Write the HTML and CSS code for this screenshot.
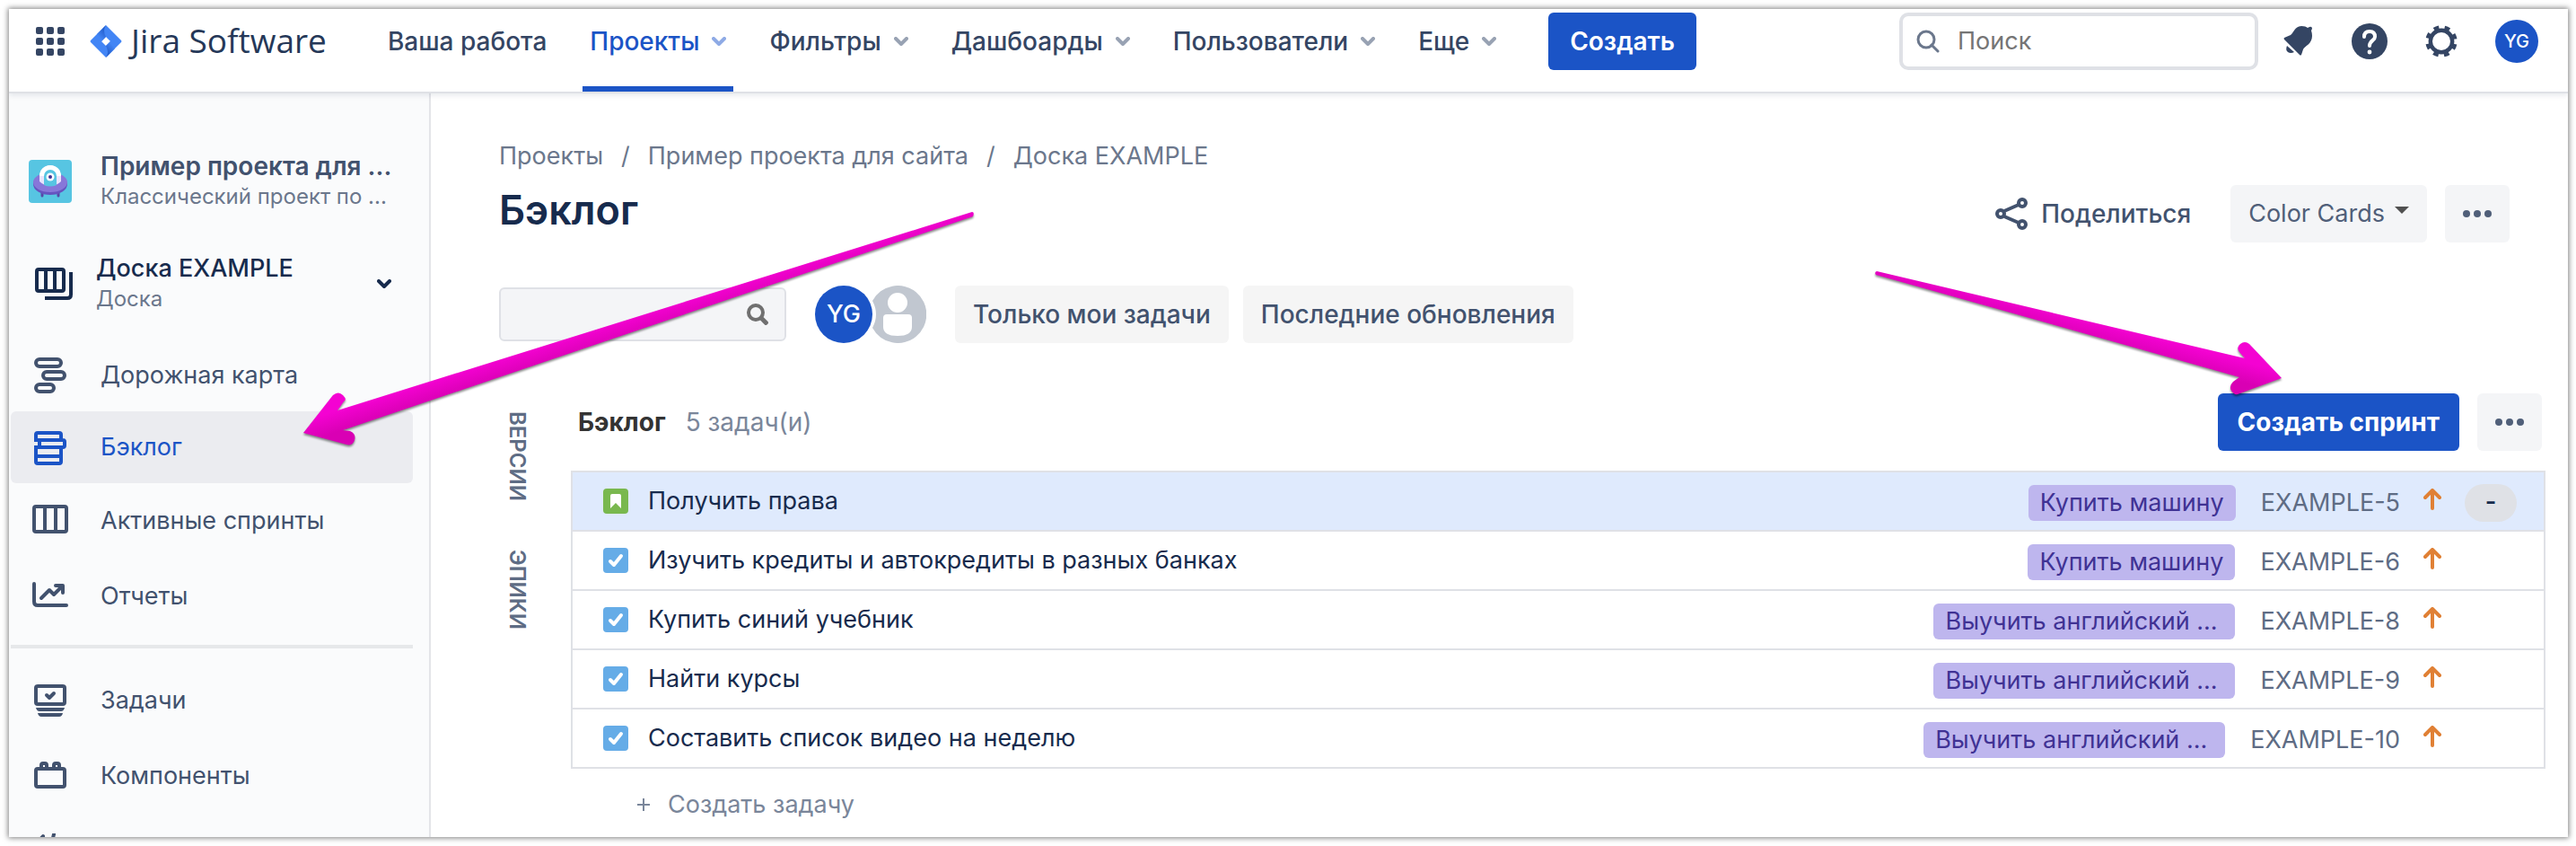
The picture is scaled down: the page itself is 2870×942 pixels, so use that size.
FILE: index.html
```html
<!DOCTYPE html>
<html lang="ru">
<head>
<meta charset="utf-8">
<title>Бэклог - Jira Software</title>
<link rel="stylesheet" href="styles.css">
</head>
<body>
<svg class="defs" aria-hidden="true">
  <defs>
    <symbol id="chev" viewBox="0 0 16 10"><path d="M2 2l6 6 6-6" fill="none" stroke="currentColor" stroke-width="4" stroke-linecap="round" stroke-linejoin="round"/></symbol>
    <symbol id="dots" viewBox="0 0 32 8"><circle cx="4" cy="4" r="4"/><circle cx="16" cy="4" r="4"/><circle cx="28" cy="4" r="4"/></symbol>
    <symbol id="task" viewBox="0 0 28 28"><rect width="28" height="28" rx="4" fill="#65ace7"/><path d="M8 15l4 4 8-10" fill="none" stroke="#fff" stroke-width="4" stroke-linecap="round" stroke-linejoin="round"/></symbol>
    <symbol id="story" viewBox="0 0 28 28"><rect width="28" height="28" rx="4" fill="#79b84e"/><path d="M8 8q0-2 2-2h8q2 0 2 2v14l-6-6-6 6z" fill="#fff"/></symbol>
    <symbol id="up" viewBox="0 0 20 24"><path d="M10 22V3M2 10l8-8 8 8" fill="none" stroke="#e08035" stroke-width="4" stroke-linecap="round" stroke-linejoin="round"/></symbol>
    <linearGradient id="pink1" gradientUnits="userSpaceOnUse" x1="374" y1="122" x2="381" y2="144"><stop offset="0" stop-color="#f402d2"/><stop offset="1" stop-color="#d900b4"/></linearGradient>
    <linearGradient id="pink2" gradientUnits="userSpaceOnUse" x1="234" y1="58" x2="228" y2="80"><stop offset="0" stop-color="#f402d2"/><stop offset="1" stop-color="#d900b4"/></linearGradient>
  </defs>
</svg>
<div class="window">
  <header class="topbar">
    <button class="plain" aria-label="Приложения"><svg width="32" height="32" fill="#344563"><rect width="8" height="8" rx="2"/><rect x="12" width="8" height="8" rx="2"/><rect x="24" width="8" height="8" rx="2"/><rect y="12" width="8" height="8" rx="2"/><rect x="12" y="12" width="8" height="8" rx="2"/><rect x="24" y="12" width="8" height="8" rx="2"/><rect y="24" width="8" height="8" rx="2"/><rect x="12" y="24" width="8" height="8" rx="2"/><rect x="24" y="24" width="8" height="8" rx="2"/></svg></button>
    <a class="logo" href="#"><svg width="36" height="36" viewBox="0 0 36 36"><defs><linearGradient id="jg" x1="0.8" y1="0" x2="0.2" y2="1"><stop offset="0.1" stop-color="#1f59c8"/><stop offset="0.8" stop-color="#4285f5"/></linearGradient><linearGradient id="jh" x1="0.2" y1="1" x2="0.8" y2="0"><stop offset="0.1" stop-color="#1f59c8"/><stop offset="0.8" stop-color="#4285f5"/></linearGradient></defs><path d="M18 0L35 17q1 1 0 2L18 36 1 19q-1-1 0-2zM18 13l-5 5 5 5 5-5z" fill="#4285f5" fill-rule="evenodd"/><path d="M18 0q-4 6 0 13l-5 5-5-8z" fill="url(#jg)"/><path d="M18 36q4-6 0-13l5-5 5 8z" fill="url(#jh)"/></svg><span>Jira Software</span></a>
    <nav class="menu" aria-label="Главное меню">
      <a href="#">Ваша работа</a>
      <a href="#" class="on">Проекты<svg width="16" height="10"><use href="#chev"/></svg></a>
      <a href="#">Фильтры<svg width="16" height="10"><use href="#chev"/></svg></a>
      <a href="#">Дашбоарды<svg width="16" height="10"><use href="#chev"/></svg></a>
      <a href="#">Пользователи<svg width="16" height="10"><use href="#chev"/></svg></a>
      <a href="#">Еще<svg width="16" height="10"><use href="#chev"/></svg></a>
    </nav>
    <button class="btn primary">Создать</button>
    <div class="tools">
      <label class="search"><svg width="26" height="26" viewBox="0 0 26 26" fill="none" stroke="#6b778c" stroke-width="3" stroke-linecap="round"><circle cx="11" cy="11" r="9"/><path d="M17 17l7 7"/></svg><input type="text" placeholder="Поиск" aria-label="Поиск"></label>
      <button class="plain" aria-label="Уведомления"><svg width="34" height="34" viewBox="0 0 34 34" fill="#344563"><path d="M1 13L8 10C12 7 12 1 20 0Q25 0 27 2L29 1q3-1 3 2l-1 2q1 3 1 6C32 20 24 22 22 26L20 32q-1 1-2 0L1 15q-1-1 0-2z"/><path d="M4 22l8 7q-4 2-7 0t-1-7z"/></svg></button>
      <button class="plain" aria-label="Справка"><svg width="40" height="40" viewBox="0 0 40 40"><circle cx="20" cy="20" r="20" fill="#344563"/><path d="M14 15q0-6 6-6t6 6c0 4-6 4-6 10" fill="none" stroke="#fff" stroke-width="4" stroke-linecap="round"/><circle cx="20" cy="32" r="2.400" fill="#fff"/></svg></button>
      <button class="plain" aria-label="Настройки"><svg width="36" height="36" viewBox="0 0 36 36"><circle cx="18" cy="18" r="12.200" fill="none" stroke="#344563" stroke-width="4.400"/><circle cx="18" cy="18" r="15.500" fill="none" stroke="#344563" stroke-width="4.400" stroke-dasharray="5.770 6.404" stroke-dashoffset="-3.200"/></svg></button>
      <button class="plain avatar small">YG</button>
    </div>
  </header>
  <div class="body">
    <aside class="side">
      <div class="project">
        <svg width="48" height="48" viewBox="0 0 48 48"><rect width="48" height="48" rx="4" fill="#57c5e2"/><path d="M15 35v5M33 35v5" stroke="#5748a8" stroke-width="3" stroke-linecap="round"/><ellipse cx="24" cy="27" rx="19" ry="12" fill="#6554c0"/><ellipse cx="24" cy="25" rx="19" ry="11" fill="#8777d9"/><path d="M12 24V18a12 12 0 0 1 24 0v6q-5 5-12 5t-12-5z" fill="#e9e4fb"/><path d="M12 18a12 12 0 0 1 24 0z" fill="#fff"/><path d="M17 28V18a7 7 0 0 1 14 0v10q-7 3-14 0z" fill="#57c5e2"/><circle cx="24" cy="19" r="4.500" fill="#fff"/><circle cx="24" cy="19" r="2" fill="#403294"/></svg>
        <div class="two"><strong>Пример проекта для ...</strong><small>Классический проект по ...</small></div>
      </div>
      <button class="board">
        <svg width="42" height="36" viewBox="0 0 42 36" fill="none" stroke="#172b4d" stroke-width="4"><rect x="2" y="2" width="30" height="24" rx="2"/><path d="M12 2v24M22 2v24M40 5v25q0 4-4 4H11"/></svg>
        <span class="two"><b>Доска EXAMPLE</b><small>Доска</small></span>
        <svg class="end" width="16" height="10"><use href="#chev"/></svg>
      </button>
      <nav class="links" aria-label="Проект">
        <a href="#" class="first"><svg width="40" height="40" viewBox="0 0 40 40" fill="none" stroke="currentColor" stroke-width="4"><rect x="4" y="2" width="28" height="8" rx="4"/><rect x="12" y="16" width="24" height="8" rx="4"/><rect x="4" y="30" width="20" height="8" rx="4"/></svg>Дорожная карта</a>
        <a href="#" class="on"><svg width="40" height="40" viewBox="0 0 40 40" fill="none" stroke="currentColor" stroke-width="4"><path d="M4 14V6q0-2 2-2h24q2 0 2 2v6M8 12h26q2 0 2 2v4q0 2-2 2H8zM4 20h28v16q0 2-2 2H6q-2 0-2-2zM4 30h28"/></svg>Бэклог</a>
        <a href="#"><svg width="40" height="40" viewBox="0 0 40 40" fill="none" stroke="currentColor" stroke-width="4"><rect x="2" y="4" width="36" height="28" rx="2"/><path d="M14 4v28M26 4v28"/></svg>Активные спринты</a>
        <a href="#"><svg width="40" height="40" viewBox="0 0 40 40" fill="none" stroke="currentColor" stroke-width="4" stroke-linecap="round" stroke-linejoin="round"><path d="M2 6v20q0 4 4 4h32M10 22l9-9 5 5 9-9M26 8h8v8"/></svg>Отчеты</a>
      </nav>
      <hr>
      <nav class="links" aria-label="Дополнительно">
        <a href="#"><svg width="40" height="40" viewBox="0 0 40 40" fill="none" stroke="currentColor" stroke-width="4"><rect x="4" y="4" width="32" height="20" rx="2"/><path d="M16 14l3 3 5-5" stroke-linecap="round" stroke-linejoin="round"/><path d="M4 28h32q-1 4-4 4H8q-3 0-4-4zM6 34h28q-1 4-4 4H10q-3 0-4-4z" fill="currentColor" stroke="none"/></svg>Задачи</a>
        <a href="#"><svg width="40" height="40" viewBox="0 0 40 40" fill="none" stroke="currentColor" stroke-width="4"><rect x="4" y="12" width="32" height="20" rx="2"/><path d="M10 12V8q0-2 2-2h2q2 0 2 2v4M24 12V8q0-2 2-2h2q2 0 2 2v4"/></svg>Компоненты</a>
        <a href="#" aria-label="Релизы"><svg width="40" height="40" viewBox="0 0 40 40" fill="none" stroke="currentColor" stroke-width="4" stroke-linecap="round"><path d="M24 1l-6 24M12 3L4 12"/></svg></a>
      </nav>
    </aside>
    <main class="main">
      <nav class="crumbs" aria-label="Навигация"><a href="#">Проекты</a><span>/</span><a href="#">Пример проекта для сайта</a><span>/</span><a href="#">Доска EXAMPLE</a></nav>
      <div class="head">
        <h1>Бэклог</h1>
        <div class="actions">
          <button class="plain share"><svg width="36" height="36" viewBox="0 0 36 36" fill="none" stroke="currentColor" stroke-width="4"><circle cx="6" cy="18" r="4"/><circle cx="30" cy="6" r="4"/><circle cx="30" cy="30" r="4"/><path d="M10 15L26 8M10 21l16 7"/></svg>Поделиться</button>
          <button class="btn cards">Color Cards<svg width="16" height="8" viewBox="0 0 16 8" fill="#505050"><path d="M0 0h16l-8 8z"/></svg></button>
          <button class="btn more" aria-label="Ещё"><svg width="32" height="8" fill="#505f79"><use href="#dots"/></svg></button>
        </div>
      </div>
      <div class="filters">
        <label class="find"><input type="text" aria-label="Поиск в бэклоге"><svg width="24" height="24" viewBox="0 0 24 24" fill="none" stroke="#707070"><circle cx="10" cy="10" r="8" stroke-width="4"/><path d="M16 16l7 7" stroke-width="5"/></svg></label>
        <div class="people"><button class="plain avatar">YG</button><svg width="60" height="64" viewBox="0 0 60 64"><path d="M0 17A32 32 0 1 1 0 47Q8 32 0 17z" fill="#c1c7d0"/><circle cx="28" cy="19" r="11" fill="#fff"/><path d="M12 36q0-4 4-4h24q4 0 4 4v10q0 10-16 10T12 46z" fill="#fff"/></svg></div>
        <button class="btn soft">Только мои задачи</button>
        <button class="btn soft">Последние обновления</button>
      </div>
      <div class="plan">
        <div class="tabs"><button class="plain">ВЕРСИИ</button><button class="plain">ЭПИКИ</button></div>
        <section class="backlog">
          <div class="bar"><h2>Бэклог</h2><span class="count">5 задач(и)</span><button class="btn primary strong">Создать спринт</button><button class="btn more" aria-label="Действия"><svg width="32" height="8" fill="#505f79"><use href="#dots"/></svg></button></div>
          <ul class="list">
            <li class="picked"><svg width="28" height="28"><use href="#story"/></svg><span class="name">Получить права</span><span class="tag">Купить машину</span><a href="#">EXAMPLE-5</a><svg class="prio" width="20" height="24"><use href="#up"/></svg><span class="est">-</span></li>
            <li><svg width="28" height="28"><use href="#task"/></svg><span class="name">Изучить кредиты и автокредиты в разных банках</span><span class="tag">Купить машину</span><a href="#">EXAMPLE-6</a><svg class="prio" width="20" height="24"><use href="#up"/></svg><span class="est none"></span></li>
            <li><svg width="28" height="28"><use href="#task"/></svg><span class="name">Купить синий учебник</span><span class="tag long">Выучить английский ...</span><a href="#">EXAMPLE-8</a><svg class="prio" width="20" height="24"><use href="#up"/></svg><span class="est none"></span></li>
            <li><svg width="28" height="28"><use href="#task"/></svg><span class="name">Найти курсы</span><span class="tag long">Выучить английский ...</span><a href="#">EXAMPLE-9</a><svg class="prio" width="20" height="24"><use href="#up"/></svg><span class="est none"></span></li>
            <li><svg width="28" height="28"><use href="#task"/></svg><span class="name">Составить список видео на неделю</span><span class="tag long">Выучить английский ...</span><a href="#">EXAMPLE-10</a><svg class="prio" width="20" height="24"><use href="#up"/></svg><span class="est none"></span></li>
          </ul>
          <button class="plain add"><svg width="14" height="14" viewBox="0 0 14 14" stroke="currentColor" stroke-width="2"><path d="M7 0v14M0 7h14"/></svg>Создать задачу</button>
        </section>
      </div>
    </main>
  </div>
</div>
<svg class="arrow left" width="760" height="270" viewBox="0 0 760 270"><path d="M749 7Q752 7 750 12L48 250 56 251Q63 254 61 261T52 266L4 253 37 211Q43 206 48 211T49 218L42 228z" fill="url(#pink1)"/></svg>
<svg class="arrow right" width="464" height="150" viewBox="0 0 464 150"><path d="M7 7Q4 8 6 11L411 125 404 130Q399 135 402 140T409 144L458 126 422 88Q417 84 412 88T411 97L417 104z" fill="url(#pink2)"/></svg>
</body>
</html>
```
FILE: styles.css
```css
* { box-sizing: border-box; }

body {
  margin: 0;
  height: 100vh;
  padding: 10px 9px 10px 10px;
  position: relative;
  overflow: hidden;
  background: #fff;
  color: #172b4d;
  font: 27px/40px Inter, "Noto Sans", sans-serif;
}

a { color: inherit; text-decoration: none; }
button, input { font: inherit; color: inherit; }
button { cursor: pointer; }
svg { display: block; flex: none; }
h1, h2, ul { margin: 0; padding: 0; }
.defs { position: absolute; width: 0; height: 0; }

.window {
  height: 100%;
  display: flex;
  flex-direction: column;
  overflow: hidden;
  background: #fff;
  box-shadow: 0 0 6px 1px rgba(0, 0, 0, 0.5);
}

.plain { border: 0; padding: 0; background: none; }

.btn {
  height: 64px;
  flex: none;
  border: 0;
  border-radius: 6px;
  padding: 0 20px;
  background: #f4f5f7;
  color: #505f79;
  white-space: nowrap;
}
.btn.primary { padding: 0 24px; background: #1b54c6; color: #fff; font-size: 28px; font-weight: 600; }
.btn.strong { padding: 0 22px; font-weight: 700; margin-left: auto; }
.btn.more { width: 72px; margin-left: 20px; }
.btn.soft { background: #f5f5f5; color: #42526e; font-size: 28px; font-weight: 500; }

/* top bar */
.topbar {
  position: relative;
  z-index: 1;
  height: 94px;
  flex: none;
  display: flex;
  align-items: flex-start;
  padding: 4px 33px 0 30px;
  border-bottom: 2px solid #dfe1e6;
  box-shadow: 0 2px 6px rgba(9, 30, 66, 0.1);
  color: #344563;
}
.topbar > .plain, .logo { height: 64px; display: flex; align-items: center; }
.logo { margin-left: 28px; gap: 10px; color: #253858; font: 37px/36px "Open Sans", sans-serif; white-space: nowrap; }
.logo span { padding-bottom: 2px; }
.menu { display: flex; align-self: stretch; margin-left: 60px; gap: 32px; font-size: 28px; font-weight: 500; white-space: nowrap; }
.menu a { display: flex; align-items: center; gap: 14px; padding: 0 8px 18px; border-bottom: 6px solid transparent; }
.menu svg { color: #98a2b3; }
.menu .on { color: #1b54c6; border-bottom-color: #1b54c6; }
.menu .on svg { color: #8eaae5; }
.topbar > .primary { margin-left: 50px; }
.tools { display: flex; align-items: center; margin-left: auto; height: 64px; }
.tools .plain { display: flex; align-items: center; justify-content: center; margin-left: 42px; }
.tools .search + .plain { margin-left: 28px; }
.search {
  width: 400px;
  height: 64px;
  display: flex;
  align-items: center;
  gap: 20px;
  padding: 0 15px;
  border: 4px solid #dfe1e6;
  border-radius: 10px;
}
.search input { flex: 1; min-width: 0; border: 0; padding: 0; outline: 0; background: none; }
.search input::placeholder { color: #757575; opacity: 1; }
.avatar { width: 64px; height: 64px; border-radius: 50%; background: #1b54c6; color: #fff; font-size: 27px; font-weight: 500; }
.avatar.small { width: 48px; height: 48px; font-size: 20px; }

/* side navigation */
.body { flex: 1; min-height: 0; display: flex; }
.side {
  width: 470px;
  flex: none;
  overflow: hidden;
  border-right: 2px solid #e3e4e8;
  background: #fafbfc;
  color: #42526e;
}
.project { display: flex; align-items: center; gap: 32px; padding: 62px 0 0 22px; height: 134px; }
.two { display: flex; flex-direction: column; min-width: 0; text-align: left; }
.two > * { line-height: 34px; white-space: nowrap; }
.two small { font-size: 24px; color: #6b778c; }
.project strong { font-size: 28px; font-weight: 600; }
.board { display: flex; align-items: center; width: 448px; margin: 38px 0 0 2px; padding: 0 24px 0 27px; border: 0; background: none; height: 80px; color: #172b4d; }
.board .two { margin-left: 26px; }
.board b { font-weight: 500; }
.board .end { margin-left: auto; }
.links { width: 448px; margin-left: 2px; padding-top: 22px; }
.links a { display: flex; align-items: center; gap: 36px; height: 84px; padding-left: 24px; border-radius: 6px; }
.links .first, .links .on { height: 80px; }
.links .on { background: #ebecf0; color: #1b54c6; }
.side hr { width: 448px; height: 4px; margin: 12px 0 0 2px; border: 0; background: #e6e8ea; }
.side hr + .links { padding-top: 16px; }

/* main column */
.main { flex: 1; min-width: 0; padding: 50px 25px 0 76px; }
.crumbs { display: flex; gap: 20px; color: #6b778c; white-space: nowrap; }
.head { display: flex; align-items: flex-start; justify-content: space-between; height: 64px; margin: 12px 40px 0 0; }
h1 { font-size: 45px; line-height: 56px; font-weight: 600; }
.actions { display: flex; align-items: center; }
.share { display: flex; align-items: center; gap: 15px; margin-right: 44px; color: #42526e; font-size: 28px; font-weight: 500; }
.cards { display: flex; align-items: center; gap: 11px; }
.cards svg { margin-bottom: 8px; }
.filters { display: flex; align-items: center; margin-top: 48px; }
.find { width: 320px; height: 60px; display: flex; align-items: center; padding: 0 18px; border: 2px solid #dfe1e6; border-radius: 6px; background: #f4f5f7; }
.find input { flex: 1; min-width: 0; border: 0; outline: 0; background: none; }
.people { display: flex; margin: 0 32px; }
.filters .soft + .soft { margin-left: 16px; }
.plan { display: flex; margin-top: 56px; }
.tabs { width: 80px; flex: none; display: flex; flex-direction: column; align-items: flex-start; gap: 54px; padding-top: 20px; }
.tabs button { writing-mode: vertical-rl; font-size: 24px; line-height: 40px; font-weight: 600; color: #5e6c84; }
.backlog { flex: 1; min-width: 0; }
.bar { display: flex; align-items: center; padding: 0 4px 0 8px; font-size: 28px; }
h2 { font-size: 28px; line-height: 40px; font-weight: 700; color: #333; }
.count { margin-left: 22px; color: #7a869a; }
.list { margin-top: 22px; border: 2px solid #dfe1e6; list-style: none; }
.list li { display: flex; align-items: center; height: 66px; padding: 0 30px 0 34px; border-bottom: 2px solid #dfe1e6; }
.list li:last-child { height: 64px; border-bottom: 0; }
.list .picked { background: #dfeafd; }
.name { margin-left: 22px; margin-right: auto; white-space: nowrap; }
.tag { margin-top: 4px; padding: 0 13px; border-radius: 6px; white-space: nowrap; background: #beb6ee; color: #403294; }
.tag.long { width: 336px; }
.list a { margin: 4px 0 0 28px; color: #5e6c84; }
.prio { margin: 0 26px 4px; }
.est { width: 58px; height: 42px; margin-top: 4px; border-radius: 21px; background: #dfe1e6; text-align: center; font-weight: 600; }
.est.none { background: none; }
.add { display: flex; align-items: center; gap: 20px; margin: 20px 0 0 74px; color: #7a869a; }

/* pointer arrows drawn over the page */
.arrow { position: absolute; filter: drop-shadow(0 2px 1px rgba(0, 0, 0, 0.45)); pointer-events: none; }
.arrow.left { left: 334px; top: 229px; }
.arrow.right { right: 322px; top: 295px; }
```
